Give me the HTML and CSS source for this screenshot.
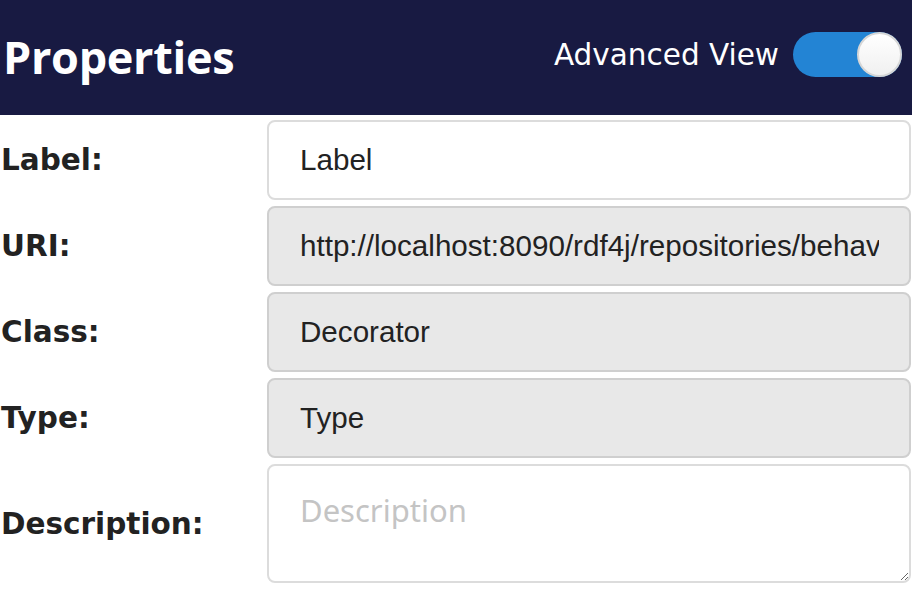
FILE: index.html
```html
<!DOCTYPE html>
<html>
<head>
<meta charset="utf-8">
<link rel="stylesheet" href="styles.css">
</head>
<body>
<div class="header">
  <h1 class="title">Properties</h1>
  <div class="adv">
    <span class="adv-label">Advanced View</span>
    <span class="toggle"><span class="knob"></span></span>
  </div>
</div>
<div class="form">
  <div class="row">
    <label class="lbl">Label:</label>
    <input class="field" type="text" value="Label">
  </div>
  <div class="row">
    <label class="lbl">URI:</label>
    <input class="field ro" type="text" value="http://localhost:8090/rdf4j/repositories/behaviour" readonly>
  </div>
  <div class="row">
    <label class="lbl">Class:</label>
    <input class="field ro" type="text" value="Decorator" readonly>
  </div>
  <div class="row">
    <label class="lbl">Type:</label>
    <input class="field ro" type="text" value="Type" readonly>
  </div>
  <div class="row">
    <label class="lbl">Description:</label>
    <textarea class="field area" placeholder="Description"></textarea>
  </div>
</div>
</body>
</html>
```
FILE: styles.css
```css
html, body {
  margin: 0;
  padding: 0;
  background: #fff;
}
.header {
  height: 115px;
  background: #181a42;
  display: flex;
  align-items: center;
  justify-content: space-between;
  padding: 0 10px 4px 3px;
  box-sizing: border-box;
}
.title {
  margin: 0;
  font-family: "Open Sans", "Noto Sans", sans-serif;
  font-weight: 700;
  font-size: 45px;
  color: #fff;
  letter-spacing: -0.3px;
  padding-top: 2px;
}
.adv {
  display: flex;
  align-items: center;
  gap: 14px;
  padding-bottom: 2px;
}
.adv-label {
  font-family: "DejaVu Sans", Verdana, sans-serif;
  font-size: 29.5px;
  color: #fff;
}
.toggle {
  display: block;
  position: relative;
  width: 109px;
  height: 45px;
  border-radius: 23px;
  background: #2384d4;
}
.knob {
  position: absolute;
  right: 0;
  top: 0;
  width: 45px;
  height: 45px;
  box-sizing: border-box;
  border-radius: 50%;
  background: linear-gradient(#ffffff, #f0f0f0);
  border: 2px solid #d6d6d6;
}
.form {
  display: flex;
  flex-direction: column;
  gap: 6px;
  padding-top: 5px;
  padding-right: 1px;
}
.row {
  display: grid;
  grid-template-columns: 267px 1fr;
  align-items: center;
}
.lbl {
  font-family: "DejaVu Sans", Verdana, sans-serif;
  font-weight: 700;
  font-size: 29.5px;
  color: #222;
  padding-left: 1px;
}
.field {
  display: block;
  width: 100%;
  height: 80px;
  box-sizing: border-box;
  border: 2px solid #dcdcdc;
  border-radius: 8px;
  background: #fff;
  font-family: "Liberation Sans", Arial, sans-serif;
  font-size: 29.6px;
  color: #222;
  padding: 0 30px 0 31px;
  margin: 0;
  outline: none;
}
.ro {
  background: #e8e8e8;
  border-color: #cfcfcf;
}
.area {
  height: 119px;
  padding-top: 23px;
  resize: vertical;
  font-family: "Noto Sans", sans-serif;
  font-size: 31px;
}
.area::placeholder {
  color: #c4c4c4;
}
```
